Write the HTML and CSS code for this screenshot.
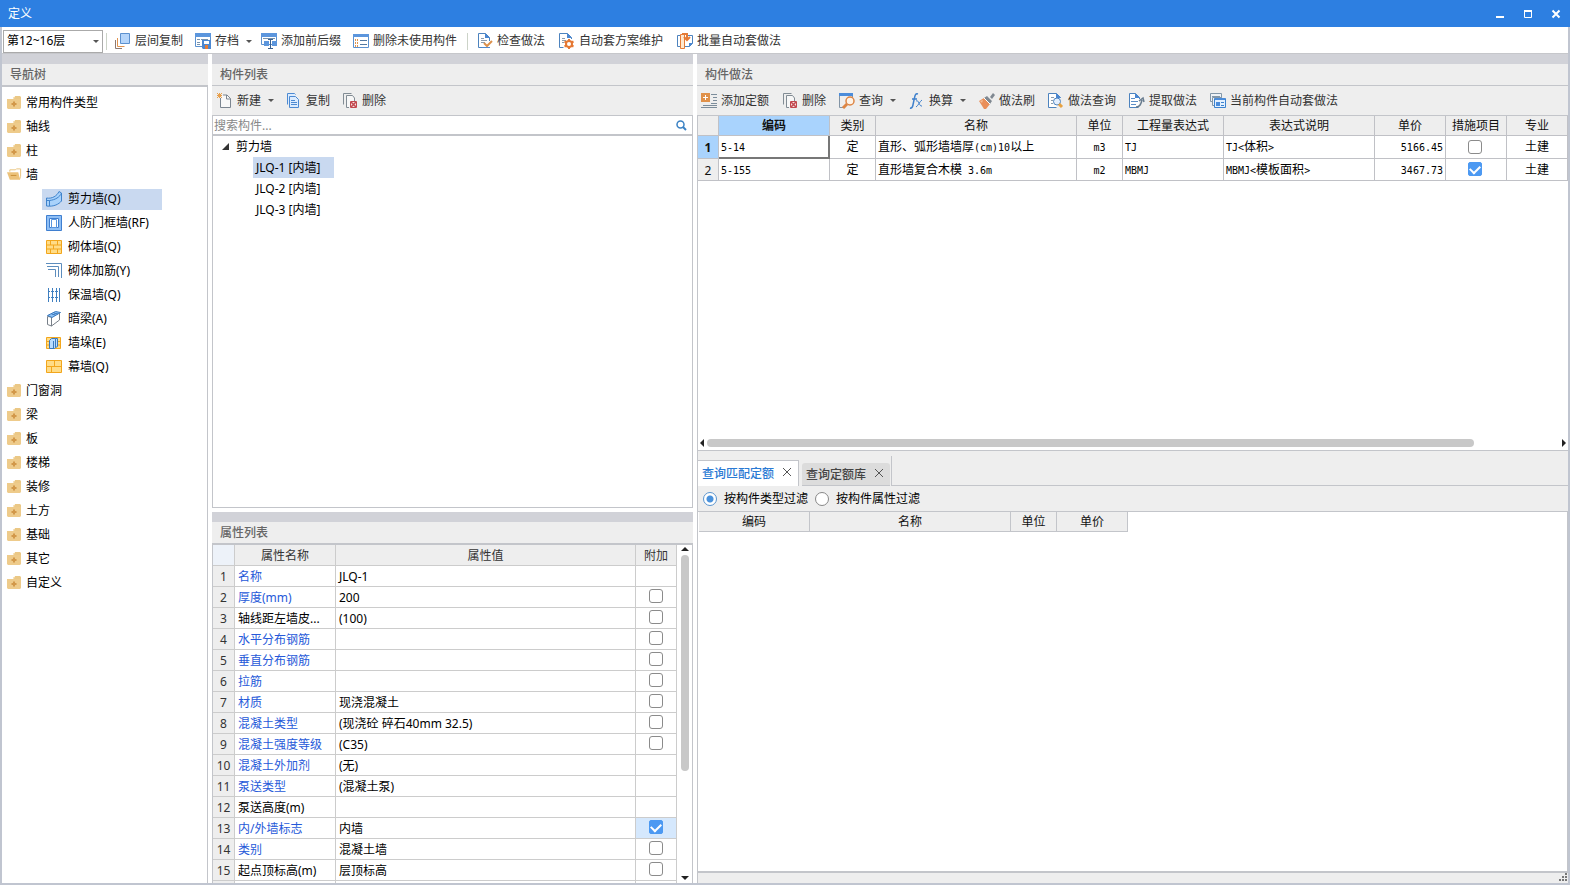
FILE: index.html
```html
<!DOCTYPE html>
<html lang="zh-CN">
<head>
<meta charset="utf-8">
<title>定义</title>
<link rel="stylesheet" href="styles.css">
</head>
<body>
<svg class="sprite" aria-hidden="true">
  <symbol id="folder" viewBox="0 0 14 13"><path fill="#f6e3bd" d="M6 1h7v3H6z"/><path fill="#ebc886" d="M8 0h5l1 1v2H7z"/><path fill="#eecb8b" d="M0 3h14v9l-1 1H1l-1-1z"/><path stroke="#d2984a" stroke-width="2" d="M4.500 8h5M7 5.500v5"/></symbol>
  <symbol id="folder-open" viewBox="0 0 16 13"><path fill="#fff" stroke="#e9c27a" d="M3 3.500V1.500h6l1-1h4.500v8l-1 3"/><path fill="#ecc27a" d="M0 4h12l2 8H3z"/><path stroke="#c98d35" d="M4 7.500h6"/></symbol>
  <symbol id="w-shear" viewBox="0 0 16 16"><path fill="#a9d2fb" stroke="#3f83cc" d="M.5 7C6 8 11 5 13 .5l2.500 1.500v8C13 13 8 16 .5 15z"/><path fill="none" stroke="#3f83cc" d="M.5 9.500h3C9 9 14 6 15.500 2M3.500 9.500V15"/></symbol>
  <symbol id="w-frame" viewBox="0 0 16 16"><path fill="#8fbff5" stroke="#3f7fd0" d="M.5.5h15v15H.5z"/><path fill="#fff" stroke="#3f7fd0" d="M3.500 3.500h9v9h-9z"/><path fill="#fff" stroke="#5a96df" d="M5.500 4.500h5v8h-5z"/></symbol>
  <symbol id="w-brick" viewBox="0 0 16 14"><path fill="#ffdc87" stroke="#f2a61c" d="M.5.5h15v13H.5zM.5 5h15M.5 9h15M4.500.5V5M11.500.5V5M7.500 5v4M4.500 9v4.500M11.500 9v4.500"/></symbol>
  <symbol id="w-rebar" viewBox="0 0 16 16"><path fill="none" stroke="#5d8dbd" d="M0 .5h15.500V15M1 3.500h11.500V14M2 6.500h7.500V14"/></symbol>
  <symbol id="w-insul" viewBox="0 0 14 16"><path stroke="#3f7fc0" d="M1.500 1v14M12.500 1v14"/><path stroke="#3f7fc0" d="M5.500 1v14M9.500 1v14"/><path stroke="#3f7fc0" stroke-dasharray="1 1" d="M2 4.500h10M2 10.500h10"/></symbol>
  <symbol id="w-beam" viewBox="0 0 14 16"><path fill="#fff" stroke="#777f88" d="M.5 5.500v8l4 1.500V6zM4.500 15l8-6V2"/><path fill="#8dc1f5" stroke="#3b79bd" d="M.5 4.500l8-4 5 1-8.500 5zM4.500 3l4 1M7 2l4 1"/></symbol>
  <symbol id="w-pier" viewBox="0 0 16 14"><path fill="#ffdc87" stroke="#f2a61c" d="M.5 1.500h14v11H.5zM.5 5.500h14M.5 9h14"/><path fill="#b9dcff" stroke="#3b79bd" d="M3.500 4.500l2-2h4v9l-1 1h-5zM9.500 2.500h2v8l-2 1M7.500 5v7"/></symbol>
  <symbol id="w-curtain" viewBox="0 0 16 14"><path fill="#ffdc87" stroke="#f2a61c" d="M.5.5h15v12H.5zM.5 6.500h15M8.500.5v6M5.500 6.500v6"/></symbol>

  <symbol id="layers" viewBox="0 0 16 16"><path fill="#b5d5fa" stroke="#5c91cf" d="M5.500.5h9v10h-9z"/><path fill="none" stroke="#e0934f" d="M2.500 5v8.500h7"/><path fill="none" stroke="#8c7a72" d="M.5 7v8.500H7"/></symbol>
  <symbol id="archive" viewBox="0 0 16 16"><path fill="#fff" stroke="#5c91cf" d="M.5.5h15v13H.5z"/><path fill="#5c96dd" d="M0 0h16v4H0z"/><path stroke="#7893ae" d="M2 6.500h3M6 6.500h7M2 9.500h3M2 11.500h3"/><path fill="#4c88d2" d="M7 7h9v9H8l-1-1z"/><path fill="#fff" d="M9 8h5v3H9z"/><path fill="#e57c37" d="M10 12h3v4h-3z"/></symbol>
  <symbol id="affix" viewBox="0 0 16 16"><path fill="#fff" stroke="#5c91cf" d="M.5.5h15v11H.5z"/><path fill="#5c96dd" d="M0 0h16v4H0zM3 8h5v5H3zM11 8h5v5h-5z"/><path stroke="#7893ae" d="M2 5.500h12"/><path fill="none" stroke="#395f8e" d="M7 6.500h5M9.500 6.500v9M7 15.500h5"/></symbol>
  <symbol id="unused" viewBox="0 0 16 14"><path fill="#fff" stroke="#5c91cf" d="M.5.5h15v13H.5z"/><path fill="#5c96dd" d="M0 0h16v3H0z"/><path stroke="#df944f" stroke-width="2" stroke-dasharray="1 1" d="M2 6h3M2 9h3M2 12h3"/><path stroke="#5278a1" d="M7 6.500h7M7 10.500h7"/></symbol>
  <symbol id="check-doc" viewBox="0 0 16 16"><path fill="#fff" stroke="#4d83be" d="M12.500 8V4.500l-4-4h-7v14h5"/><path fill="#4b87d1" d="M8 0l5 5H8zM5 14h8v1H5z"/><path stroke="#8b9cad" d="M4 5.500h3M4 7.500h6M4 9.500h4"/><path fill="none" stroke="#dc914c" stroke-width="2" d="M7 10l3 3 5-5"/></symbol>
  <symbol id="gear-doc" viewBox="0 0 16 16"><path fill="#fff" stroke="#4d83be" d="M12.500 6V4.500l-4-4h-8v14h4"/><path fill="#4b87d1" d="M8 0l5 5H8z"/><path stroke="#8b9cad" d="M3 5.500h3M3 7.500h4M3 9.500h2"/><circle cx="10" cy="11" r="3" fill="#fff" stroke="#e57833" stroke-width="2"/><path stroke="#e57833" stroke-width="2" d="M10 6v2M10 14v2M5.500 8.500l2 1M12.500 12.500l2 1M5.500 13.500l2-1M12.500 9.500l2-1"/></symbol>
  <symbol id="batch" viewBox="0 0 16 16"><path fill="#fff" stroke="#4d83be" d="M3 13.500H.5v-11H3M9 2.500h6.500v8l-3 3H8"/><path fill="#4b87d1" d="M12 10h4l-4 4z"/><path fill="#ffe8ce" stroke="#e57b36" d="M3.500 1.500h4v14h-4z"/><path fill="none" stroke="#e57b36" stroke-width="2" d="M5 1h5v5M7 4l3 3 3-3"/></symbol>

  <symbol id="new-doc" viewBox="0 0 16 16"><path fill="#f8f8f8" stroke="#7c8691" d="M3.500 5V14.500h10V5.500l-3.500-3.500H6M9.500 2v4h4"/><path fill="#e8a04c" d="M0 0h1v1H0zM2 0h1v1H2zM4 0h1v1H4zM1 1h3v1H1zM0 2h5v1H0zM1 3h3v1H1zM0 4h1v1H0zM2 4h1v1H2zM4 4h1v1H4z"/></symbol>
  <symbol id="copy" viewBox="0 0 16 16"><path fill="#dcecff" stroke="#4d8ad2" d="M1.500 11.500V.5h7l1 1"/><path fill="#dcecff" stroke="#4d8ad2" d="M3.500 3.500h6l3 3v8h-9z"/><path stroke="#4d8ad2" d="M5 7.500h4M5 9.500h6M5 11.500h6"/></symbol>
  <symbol id="delete" viewBox="0 0 16 16"><path fill="none" stroke="#828c94" d="M1.500 11.500V.5h8"/><path fill="#f7f7f7" stroke="#828c94" d="M12.500 8V5l-2-2.500h-6v12H7"/><path fill="#f6dcdc" stroke="#c2484f" d="M8.500 8.500h6v6h-6z"/><path stroke="#c2484f" stroke-width="1.500" d="M9 9l5 5M14 9l-5 5"/></symbol>
  <symbol id="add-quota" viewBox="0 0 16 16"><path fill="#e0914a" d="M0 0h9v9H0z"/><path stroke="#fff" d="M2 4.500h5M4.500 2v5"/><path stroke="#7c8d9b" d="M10 1.500h6M12 4.500h4M12 7.500h4M10 10.500h6M2 12.500h14M0 14.500h16"/></symbol>
  <symbol id="query" viewBox="0 0 16 16"><path fill="none" stroke="#8294a5" d="M.5 3v11.500H4M13.500 3v2"/><path fill="#4b8cda" d="M0 0h14v3H0z"/><circle cx="11" cy="8" r="4" fill="#fdf3e8" stroke="#dd8544" stroke-width="1.500"/><path stroke="#dd8544" stroke-width="3" d="M8 11l-4 4"/></symbol>
  <symbol id="fx" viewBox="0 0 16 16"><path fill="none" stroke="#3f80cc" stroke-width="1.500" d="M9 1C6 0 6 3 5 7s-1 9-4 8M3 6h5"/><path fill="none" stroke="#3f80cc" d="M7 8c3-2 3 6 6 5M13 7c-2 1-4 6-6 7"/></symbol>
  <symbol id="brush" viewBox="0 0 16 16"><path fill="#e98f5a" d="M0 8l5-3 6 6-4 5H5z"/><path fill="#f4bd96" d="M1 8l3-1-1 3z"/><path fill="#7f8891" d="M5 5l3-2 5 5-2 3zM11 4l3-4 2 2-3 4z"/><path stroke="#fff" d="M5 5l6 6"/></symbol>
  <symbol id="doc-query" viewBox="0 0 16 16"><path fill="#fff" stroke="#4d83be" d="M12.500 5v-.5l-4-4h-8v14h8"/><path fill="#4b87d1" d="M8 0l5 5H8z"/><path stroke="#8b9cad" d="M3 4.500h3M3 7.500h2M3 10.500h2"/><circle cx="9" cy="8.500" r="3.500" fill="#e3efff" stroke="#4d83be"/><path stroke="#e7a242" stroke-width="3" d="M11 11l3 3"/></symbol>
  <symbol id="extract" viewBox="0 0 16 16"><path fill="#fff" stroke="#4d83be" d="M10.500 6V4.500l-4-4h-6v14h9"/><path fill="#4b87d1" d="M6 0l5 5H6z"/><path stroke="#5d8ec6" d="M2 5.500h4M2 8.500h7M2 11.500h5"/><path fill="none" stroke="#687c8f" stroke-width="1.500" d="M7 14c4 0 5-3 6-7M10 8l4-3 1 4"/></symbol>
  <symbol id="auto" viewBox="0 0 16 16"><path fill="#eef2f6" stroke="#8296a8" d="M.5.5h11v8H.5zM2 3.500h8"/><path fill="#eef2f6" stroke="#8296a8" d="M2.500 4.500h9v8h-9z"/><path fill="#e2f0ff" stroke="#3c82cf" d="M4.500 5.500h11v9h-11z"/><path fill="#4b8cda" d="M5 5h10v2H5zM6 9h4v4H6z"/><path stroke="#3c82cf" d="M11 9.500h3M11 12.500h3"/></symbol>
  <symbol id="search" viewBox="0 0 11 11"><circle cx="4.500" cy="4.500" r="3.500" fill="none" stroke="#3b82c4" stroke-width="1.500"/><path stroke="#3b82c4" stroke-width="2" d="M7 7l3 3"/></symbol>
  <symbol id="close" viewBox="0 0 10 10"><path stroke="currentColor" d="M1 1l8 8M9 1L1 9"/></symbol>
</svg>

<header class="titlebar">
  <h1>定义</h1>
  <div class="window-buttons">
    <button aria-label="最小化"><svg viewBox="0 0 10 10"><path stroke="#fff" stroke-width="2" d="M1 8h8"/></svg></button>
    <button aria-label="最大化"><svg viewBox="0 0 10 10"><path fill="none" stroke="#fff" d="M1.500 2.500h7v6h-7z"/><path fill="#fff" d="M1 1h8v2H1z"/></svg></button>
    <button aria-label="关闭"><svg viewBox="0 0 10 10"><path stroke="#fff" stroke-width="2" d="M1.500 1.500l7 7M8.500 1.500l-7 7"/></svg></button>
  </div>
</header>

<div class="frame">
  <div class="main-toolbar toolbar">
    <label class="floor"><select aria-label="楼层"><option>第12~16层</option></select><i class="caret"></i></label>
    <span class="sep"></span>
    <button class="tool"><svg><use href="#layers"/></svg>层间复制</button>
    <button class="tool tight"><svg><use href="#archive"/></svg>存档<i class="caret"></i></button>
    <button class="tool"><svg><use href="#affix"/></svg>添加前后缀</button>
    <button class="tool"><svg><use href="#unused"/></svg>删除未使用构件</button>
    <span class="sep"></span>
    <button class="tool"><svg><use href="#check-doc"/></svg>检查做法</button>
    <button class="tool"><svg><use href="#gear-doc"/></svg>自动套方案维护</button>
    <button class="tool"><svg><use href="#batch"/></svg>批量自动套做法</button>
  </div>

  <main class="workspace">
    <nav class="panel nav-panel">
      <h2 class="heavy">导航树</h2>
      <ul class="nav-tree">
        <li><svg><use href="#folder"/></svg>常用构件类型</li>
        <li><svg><use href="#folder"/></svg>轴线</li>
        <li><svg><use href="#folder"/></svg>柱</li>
        <li><svg class="open"><use href="#folder-open"/></svg>墙</li>
        <li class="child selected"><span><svg><use href="#w-shear"/></svg>剪力墙(Q)</span></li>
        <li class="child"><span><svg><use href="#w-frame"/></svg>人防门框墙(RF)</span></li>
        <li class="child"><span><svg><use href="#w-brick"/></svg>砌体墙(Q)</span></li>
        <li class="child"><span><svg><use href="#w-rebar"/></svg>砌体加筋(Y)</span></li>
        <li class="child"><span><svg><use href="#w-insul"/></svg>保温墙(Q)</span></li>
        <li class="child"><span><svg><use href="#w-beam"/></svg>暗梁(A)</span></li>
        <li class="child"><span><svg><use href="#w-pier"/></svg>墙垛(E)</span></li>
        <li class="child"><span><svg><use href="#w-curtain"/></svg>幕墙(Q)</span></li>
        <li><svg><use href="#folder"/></svg>门窗洞</li>
        <li><svg><use href="#folder"/></svg>梁</li>
        <li><svg><use href="#folder"/></svg>板</li>
        <li><svg><use href="#folder"/></svg>楼梯</li>
        <li><svg><use href="#folder"/></svg>装修</li>
        <li><svg><use href="#folder"/></svg>土方</li>
        <li><svg><use href="#folder"/></svg>基础</li>
        <li><svg><use href="#folder"/></svg>其它</li>
        <li><svg><use href="#folder"/></svg>自定义</li>
      </ul>
    </nav>

    <div class="middle">
      <section class="panel boxed">
        <h2>构件列表</h2>
        <div class="toolbar sub">
          <button class="tool"><svg><use href="#new-doc"/></svg>新建<i class="caret"></i></button>
          <button class="tool"><svg><use href="#copy"/></svg>复制</button>
          <button class="tool"><svg><use href="#delete"/></svg>删除</button>
        </div>
        <label class="search"><input type="text" placeholder="搜索构件..." aria-label="搜索构件"><svg><use href="#search"/></svg></label>
        <ul class="part-tree">
          <li class="root"><svg viewBox="0 0 7 7"><path fill="#333" d="M7 0v7H0z"/></svg>剪力墙</li>
          <li class="leaf"><span class="selected">JLQ-1 [内墙]</span></li>
          <li class="leaf"><span>JLQ-2 [内墙]</span></li>
          <li class="leaf"><span>JLQ-3 [内墙]</span></li>
        </ul>
      </section>

      <section class="panel props-panel">
        <h2 class="heavy">属性列表</h2>
        <div class="props-body">
          <div class="props-clip">
          <table class="props">
            <colgroup><col class="p-no"><col class="p-name"><col><col class="p-add"></colgroup>
            <thead><tr><th class="corner"></th><th>属性名称</th><th>属性值</th><th>附加</th></tr></thead>
            <tbody>
              <tr><th>1</th><td class="blue">名称</td><td>JLQ-1</td><td></td></tr>
              <tr><th>2</th><td class="blue">厚度(mm)</td><td>200</td><td><input type="checkbox" aria-label="附加 厚度"></td></tr>
              <tr><th>3</th><td>轴线距左墙皮...</td><td>(100)</td><td><input type="checkbox" aria-label="附加 轴线距左墙皮"></td></tr>
              <tr><th>4</th><td class="blue">水平分布钢筋</td><td></td><td><input type="checkbox" aria-label="附加 水平分布钢筋"></td></tr>
              <tr><th>5</th><td class="blue">垂直分布钢筋</td><td></td><td><input type="checkbox" aria-label="附加 垂直分布钢筋"></td></tr>
              <tr><th>6</th><td class="blue">拉筋</td><td></td><td><input type="checkbox" aria-label="附加 拉筋"></td></tr>
              <tr><th>7</th><td class="blue">材质</td><td>现浇混凝土</td><td><input type="checkbox" aria-label="附加 材质"></td></tr>
              <tr><th>8</th><td class="blue">混凝土类型</td><td>(现浇砼 碎石40mm 32.5)</td><td><input type="checkbox" aria-label="附加 混凝土类型"></td></tr>
              <tr><th>9</th><td class="blue">混凝土强度等级</td><td>(C35)</td><td><input type="checkbox" aria-label="附加 混凝土强度等级"></td></tr>
              <tr><th>10</th><td class="blue">混凝土外加剂</td><td>(无)</td><td></td></tr>
              <tr><th>11</th><td class="blue">泵送类型</td><td>(混凝土泵)</td><td></td></tr>
              <tr><th>12</th><td>泵送高度(m)</td><td></td><td></td></tr>
              <tr><th>13</th><td class="blue">内/外墙标志</td><td>内墙</td><td class="marked"><input type="checkbox" checked aria-label="附加 内/外墙标志"></td></tr>
              <tr><th>14</th><td class="blue">类别</td><td>混凝土墙</td><td><input type="checkbox" aria-label="附加 类别"></td></tr>
              <tr><th>15</th><td>起点顶标高(m)</td><td>层顶标高</td><td><input type="checkbox" aria-label="附加 起点顶标高"></td></tr>
              <tr><th></th><td></td><td></td><td></td></tr>
            </tbody>
          </table>
          </div>
          <div class="vscroll"><svg viewBox="0 0 8 4"><path fill="#222" d="M0 4l4-4 4 4z"/></svg><div class="track"><div class="thumb"></div></div><svg viewBox="0 0 8 4"><path fill="#222" d="M0 0l4 4 4-4z"/></svg></div>
        </div>
      </section>
    </div>

    <div class="right">
      <section class="panel method-panel">
        <h2>构件做法</h2>
        <div class="toolbar sub wide">
          <button class="tool"><svg><use href="#add-quota"/></svg>添加定额</button>
          <button class="tool"><svg><use href="#delete"/></svg>删除</button>
          <button class="tool"><svg><use href="#query"/></svg>查询<i class="caret"></i></button>
          <button class="tool"><svg><use href="#fx"/></svg>换算<i class="caret"></i></button>
          <button class="tool"><svg><use href="#brush"/></svg>做法刷</button>
          <button class="tool"><svg><use href="#doc-query"/></svg>做法查询</button>
          <button class="tool"><svg><use href="#extract"/></svg>提取做法</button>
          <button class="tool"><svg><use href="#auto"/></svg>当前构件自动套做法</button>
        </div>
        <div class="grid-area">
          <table class="methods">
            <colgroup><col class="m-no"><col class="m-code"><col class="m-unit"><col class="m-name"><col class="m-unit"><col class="m-expr"><col class="m-desc"><col class="m-price"><col class="m-item"><col></colgroup>
            <thead><tr><th></th><th class="active">编码</th><th>类别</th><th>名称</th><th>单位</th><th>工程量表达式</th><th>表达式说明</th><th>单价</th><th>措施项目</th><th>专业</th></tr></thead>
            <tbody>
              <tr><th class="active">1</th><td class="current"><code>5-14</code></td><td class="mid">定</td><td>直形、弧形墙墙厚<code>(cm)10</code>以上</td><td class="mid"><code>m3</code></td><td><code>TJ</code></td><td><code>TJ&lt;</code>体积<code>&gt;</code></td><td class="num"><code>5166.45</code></td><td class="tick"><input type="checkbox" aria-label="措施项目 1"></td><td class="mid">土建</td></tr>
              <tr><th>2</th><td><code>5-155</code></td><td class="mid">定</td><td>直形墙复合木模<code> 3.6m</code></td><td class="mid"><code>m2</code></td><td><code>MBMJ</code></td><td><code>MBMJ&lt;</code>模板面积<code>&gt;</code></td><td class="num"><code>3467.73</code></td><td class="tick"><input type="checkbox" checked aria-label="措施项目 2"></td><td class="mid">土建</td></tr>
            </tbody>
          </table>
        </div>
        <div class="hscroll"><svg viewBox="0 0 4 8"><path fill="#222" d="M4 0v8L0 4z"/></svg><div class="track"><div class="thumb"></div></div><svg viewBox="0 0 4 8"><path fill="#222" d="M0 0v8l4-4z"/></svg></div>
      </section>

      <section class="query-panel">
        <div class="tab-strip">
          <div class="tabs">
            <div class="tab on"><button>查询匹配定额</button><button class="shut" aria-label="关闭查询匹配定额"><svg><use href="#close"/></svg></button></div>
            <div class="tab"><button>查询定额库</button><button class="shut" aria-label="关闭查询定额库"><svg><use href="#close"/></svg></button></div>
          </div>
          <div class="tab-rest"></div>
        </div>
        <div class="filters">
          <label><input type="radio" name="filter" checked>按构件类型过滤</label>
          <label><input type="radio" name="filter">按构件属性过滤</label>
        </div>
        <div class="results">
          <table>
            <colgroup><col class="r-code"><col class="r-name"><col class="r-unit"><col class="r-price"></colgroup>
            <thead><tr><th>编码</th><th>名称</th><th>单位</th><th>单价</th></tr></thead>
          </table>
        </div>
        <footer class="status"><svg viewBox="0 0 9 9"><path fill="#777" d="M7 0h2v2H7zM7 3h2v2H7zM4 3h2v2H4zM7 6h2v2H7zM4 6h2v2H4zM1 6h2v2H1z"/></svg></footer>
      </section>
    </div>
  </main>
</div>
</body>
</html>
```

FILE: styles.css
```css
* { box-sizing: border-box; }

body {
  margin: 0;
  height: 100vh;
  display: flex;
  flex-direction: column;
  overflow: hidden;
  font: 12px/20px "Noto Sans", "Noto Sans CJK SC", sans-serif;
  color: #111;
  background: #fff;
}

button, input, select { font: inherit; color: inherit; margin: 0; }
button { padding: 0; border: 0; background: none; white-space: nowrap; }
ul { list-style: none; margin: 0; padding: 0; }
h1, h2 { margin: 0; font-size: 12px; }
table { border-collapse: separate; border-spacing: 0; table-layout: fixed; }
th { font-weight: 400; }
th, td { padding: 0; white-space: nowrap; overflow: hidden; }
svg { flex: none; }
.sprite { display: none; }

/* Title bar */
.titlebar {
  flex: none;
  height: 27px;
  display: flex;
  align-items: center;
  justify-content: space-between;
  padding: 0 9px 0 8px;
  color: #fff;
  background: #2d7fe1;
}
.titlebar h1 { font-weight: 400; }
.window-buttons { display: flex; gap: 18px; }
.window-buttons button { display: flex; }
.window-buttons svg { width: 10px; height: 10px; }

.frame {
  flex: 1;
  min-height: 0;
  display: flex;
  flex-direction: column;
  border: solid #c0c5d0;
  border-width: 0 2px 2px;
}

/* Toolbars */
.toolbar { flex: none; display: flex; align-items: center; color: #333; }
.main-toolbar { height: 27px; padding: 2px 0 0 1px; border-bottom: 1px solid #c6c7cb; }
.floor { display: grid; align-items: center; width: 100px; color: #000; }
.floor select {
  grid-area: 1 / 1;
  height: 23px;
  padding: 0 3px;
  appearance: none;
  border: 1px solid #aaa;
  border-radius: 0;
  background: #fff;
}
.floor .caret { grid-area: 1 / 1; justify-self: end; margin-right: 4px; }
.sep { width: 1px; height: 17px; margin: 0 9px 0 -2px; background: #ccd3c8; }
.floor + .sep { margin: 0 8px 0 3px; }
.tool { display: flex; align-items: center; gap: 4px; margin-right: 12px; }
.tool + .sep ~ .tool { margin-right: 14px; }
.tool.tight { margin-right: 9px; }
.tool svg { width: 16px; height: 16px; }
.tool .caret { margin-left: 3px; }
.caret { border: solid transparent; border-width: 3px 3px 0; border-top-color: #555; }
.sub { height: 30px; padding-left: 5px; background: #eee; border-bottom: 1px solid #c3c5ca; }
.wide { padding-left: 4px; }
.wide .tool { margin-right: 13px; }

/* Panels */
.workspace {
  flex: 1;
  min-height: 0;
  display: grid;
  grid-template-columns: 206px 481px minmax(0, 1fr);
  gap: 4px;
}
.panel { display: flex; flex-direction: column; min-height: 0; min-width: 0; overflow: hidden; border-top: 10px solid #d1d2d8; }
.panel h2 {
  flex: none;
  height: 22px;
  padding-left: 8px;
  font-weight: 500;
  line-height: 22px;
  color: #666;
  background: #eee;
  border-bottom: 1px solid #c3c5ca;
}
.panel h2.heavy { height: 23px; border-bottom-width: 2px; }
.middle, .right { display: grid; min-height: 0; }
.middle { grid-template-rows: minmax(0, 454fr) minmax(0, 371fr); gap: 4px; }
.right { grid-template-rows: minmax(0, 397fr) minmax(0, 432fr); }
.nav-panel { box-shadow: inset -1px 0 #c3c5ca; }
.boxed { box-shadow: inset 1px 0 #c3c5ca, inset -1px -1px #c3c5ca; }

/* Navigation tree */
.nav-tree { padding: 4px 1px 0 5px; }
.nav-tree li { height: 24px; display: flex; align-items: center; gap: 5px; color: #000; }
.nav-tree li > svg { width: 14px; height: 13px; margin-bottom: 2px; }
.nav-tree li > svg.open { width: 15px; margin-right: -1px; }
.child { padding-left: 35px; }
.child span { display: flex; align-items: center; gap: 6px; width: 120px; height: 21px; padding-left: 4px; white-space: nowrap; }
.child svg { width: 16px; height: 16px; }
.nav-tree .selected span { background: #c9d9f0; }

/* Component list */
.search { flex: none; display: flex; align-items: center; height: 20px; padding: 0 6px 0 2px; border-bottom: 2px solid #c3c5ca; }
.search input { flex: 1; min-width: 0; height: 18px; padding: 1px 0 0; border: 0; outline: 0; background: none; }
.search input::placeholder { color: #888; opacity: 1; }
.search svg { width: 11px; height: 11px; }
.part-tree li { height: 21px; display: flex; align-items: center; color: #000; }
.root { gap: 7px; padding-left: 10px; }
.root svg { width: 7px; height: 7px; }
.leaf { padding-left: 41px; }
.leaf span { width: 81px; padding-left: 3px; line-height: 21px; white-space: nowrap; }
.leaf .selected { background: #c9d9f0; }

/* Property grid */
.props-panel { box-shadow: inset 1px 0 #c3c5ca; }
.props-body { flex: 1; min-height: 0; display: flex; border-right: 1px solid #c3c5ca; }
.props-clip { flex: 1; min-width: 0; overflow: hidden; }
.props { width: 100%; border-left: 1px solid #c3c5ca; }
.props th, .props td { height: 21px; padding-top: 2px; line-height: 18px; border: solid #ccc; border-width: 0 1px 1px 0; }
.props th { color: #333; background: #eee; }
.props .corner { background: #edf2f9; }
.props td { padding-left: 3px; color: #000; }
.props td:last-child { padding: 2px 1px 0 0; vertical-align: top; }
.props .blue { color: #2659d9; }
.props .marked { background: #d5e8fd; }
.p-no { width: 22px; }
.p-name { width: 101px; }
.p-add { width: 41px; }

input[type="checkbox"] {
  appearance: none;
  display: block;
  width: 14px;
  height: 14px;
  margin: 0 auto;
  border: 1px solid #8b8b8b;
  border-radius: 3px;
  background: #fff;
}
input[type="checkbox"]:checked { display: grid; place-items: center; border-color: #4c99f2; border-radius: 2px; background: #4c99f2; }
input[type="checkbox"]:checked::after {
  content: "";
  width: 8px;
  height: 5px;
  margin-bottom: 2px;
  border: solid #fff;
  border-width: 0 0 2px 2px;
  transform: rotate(-45deg);
}

/* Scroll bars */
.vscroll { width: 15px; display: flex; flex-direction: column; align-items: center; gap: 4px; padding: 2px 0 3px; }
.vscroll svg { width: 8px; height: 4px; }
.vscroll .track { flex: 1; width: 8px; }
.vscroll .thumb { height: 68%; border-radius: 4px; background: #c8c8c8; }
.hscroll { flex: none; display: flex; align-items: center; gap: 3px; height: 17px; padding: 2px 2px 0 3px; border-bottom: 1px solid #c3c5ca; }
.hscroll svg { width: 4px; height: 8px; }
.hscroll .track { flex: 1; height: 8px; }
.hscroll .thumb { width: 90%; height: 8px; border-radius: 4px; background: #c8c8c8; }

/* Method grid */
.method-panel { box-shadow: inset 1px 0 #c3c5ca; }
.grid-area { flex: 1; min-height: 0; overflow: hidden; }
.methods { width: 100%; border-left: 1px solid #c3c5ca; }
.methods th, .methods td { height: 22px; line-height: 18px; border: solid #c0c1c6; border-width: 0 1px 1px 0; }
.methods thead th { height: 20px; padding-top: 1px; }
.methods tbody tr:first-child > * { height: 23px; }
.methods tbody th { padding-top: 2px; }
.methods th { color: #111; background: #eee; }
.methods th.active { font-weight: 700; background: #a9d3fd; }
.methods td { padding: 0 2px; color: #000; }
.methods .current { border: solid #777; border-width: 0 2px 2px 0; }
.methods .mid { text-align: center; }
.methods .num { text-align: right; }
.methods .tick { padding: 0 2px 1px 0; }
.methods code { font: 10px/10px "DejaVu Sans Mono", monospace; white-space: pre; }
.m-no { width: 21px; }
.m-code { width: 111px; }
.m-unit { width: 46px; }
.m-name { width: 201px; }
.m-expr { width: 101px; }
.m-desc { width: 151px; }
.m-price { width: 71px; }
.m-item { width: 61px; }

/* Query panel */
.query-panel { display: flex; flex-direction: column; min-width: 0; background: #eee; border-left: 1px solid #c3c5ca; }
.tab-strip { flex: none; display: flex; height: 35px; padding-top: 5px; }
.tabs { display: flex; align-items: flex-end; gap: 3px; padding-right: 1px; border-right: 1px solid #c3c5ca; }
.tab-rest { flex: 1; border-bottom: 1px solid #c3c5ca; }
.tab { display: flex; align-items: center; gap: 8px; height: 23px; padding: 2px 6px 0 4px; color: #444; background: #dcdcdc; border-bottom: 1px solid #c3c5ca; border-radius: 3px 3px 0 0; }
.tab.on { height: 26px; padding-top: 0; color: #2a7ad4; background: #fff; border: solid #c3c5ca; border-width: 1px 1px 0 0; border-radius: 0; }
.tab button { display: flex; font-weight: 500; }
.tab .shut { padding-bottom: 4px; }
.tab svg { width: 10px; height: 10px; color: #555; }
.filters { flex: none; display: flex; align-items: center; gap: 7px; height: 25px; padding-left: 5px; color: #000; }
.filters label { display: flex; align-items: center; gap: 7px; white-space: nowrap; }
.filters input { appearance: none; width: 14px; height: 14px; border: 1px solid #888; border-radius: 50%; background: #fff; }
.filters input:checked { border-color: #5b95cf; background: radial-gradient(circle, #4a92dc 3px, #fff 4px); }
.results { flex: 1; min-height: 0; padding-left: 1px; background: #fff; border: solid #c3c5ca; border-width: 1px 1px 2px 0; }
.results table { width: 429px; }
.results th { height: 20px; padding-top: 1px; line-height: 18px; color: #111; background: #eee; border: solid #c3c5ca; border-width: 0 1px 1px 0; }
.r-code { width: 111px; }
.r-name { width: 201px; }
.r-unit { width: 46px; }
.r-price { width: 71px; }
.status { flex: none; display: flex; justify-content: flex-end; align-items: flex-end; height: 10px; padding: 0 1px 1px; }
.status svg { width: 9px; height: 9px; }
```
